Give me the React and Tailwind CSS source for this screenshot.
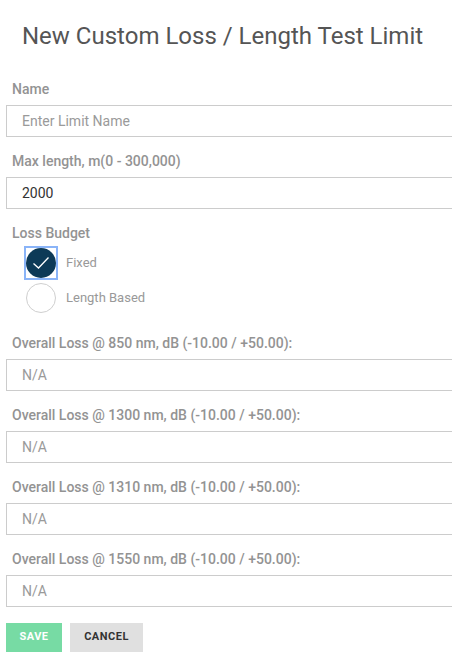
import { useState } from 'react';

const lossFields = [
  'Overall Loss @ 850 nm, dB (-10.00 / +50.00):',
  'Overall Loss @ 1300 nm, dB (-10.00 / +50.00):',
  'Overall Loss @ 1310 nm, dB (-10.00 / +50.00):',
  'Overall Loss @ 1550 nm, dB (-10.00 / +50.00):',
];

const Field = ({ label, className = 'mt-[15px]', children }) => (
  <div className={className}>
    <label className="block pl-[6px] text-[14px] font-medium leading-[18px] text-[#939393]">
      {label}
    </label>
    {children}
  </div>
);

const inputClass =
  'mt-[7px] block w-[460px] h-[32px] border border-[#cccccc] bg-white pl-[15px] text-[14px] text-[#333] placeholder:text-[#9a9a9a] outline-none';

const Radio = ({ checked, focused, label, onClick }) => (
  <button type="button" onClick={onClick} className="flex items-center gap-[9px]">
    <span
      className={`flex h-[32px] w-[32px] items-center justify-center ${
        focused ? 'outline outline-2 outline-[#8ab4f8] -outline-offset-1' : ''
      }`}
    >
      <span
        className={`flex h-[30px] w-[30px] items-center justify-center rounded-full ${
          checked ? 'bg-[#0d3a57]' : 'border border-[#cfcfcf] bg-white'
        }`}
      >
        {checked && (
          <svg width="18" height="14" viewBox="0 0 18 14" fill="none">
            <path d="M1.5 7.5 L6.5 12 L16.5 1.5" stroke="#ffffff" strokeWidth="1.3" />
          </svg>
        )}
      </span>
    </span>
    <span className="text-[13px] text-[#999]">{label}</span>
  </button>
);

const App = () => {
  const [budget, setBudget] = useState('fixed');

  return (
    <div className="min-h-screen w-[452px] overflow-hidden bg-white font-['Roboto',sans-serif]">
      {/* Dialog heading */}
      <h1 className="pl-[22px] pt-[21px] text-[24px] font-normal leading-[30px] text-[#555]">
        New Custom Loss / Length Test Limit
      </h1>

      <form className="pl-[6px]">
        <Field label="Name" className="mt-[29px]">
          <input className={inputClass} placeholder="Enter Limit Name" />
        </Field>

        <Field label="Max length, m(0 - 300,000)">
          <input className={inputClass} defaultValue="2000" />
        </Field>

        <Field label="Loss Budget">
          <div className="mt-[5px] flex flex-col gap-[3px] pb-[5px] pl-[19px]">
            <Radio
              label="Fixed"
              checked={budget === 'fixed'}
              focused={budget === 'fixed'}
              onClick={() => setBudget('fixed')}
            />
            <Radio
              label="Length Based"
              checked={budget === 'length'}
              focused={budget === 'length'}
              onClick={() => setBudget('length')}
            />
          </div>
        </Field>

        {lossFields.map((label) => (
          <Field key={label} label={label}>
            <input className={inputClass} placeholder="N/A" />
          </Field>
        ))}

        {/* Actions */}
        <div className="mt-[16px] flex gap-[8px]">
          <button
            type="button"
            className="h-[29px] w-[56px] bg-[#77dba4] text-[11px] font-bold tracking-[0.5px] text-white"
          >
            SAVE
          </button>
          <button
            type="button"
            className="h-[29px] w-[73px] bg-[#e0e0e0] text-[11px] font-bold tracking-[0.5px] text-[#333]"
          >
            CANCEL
          </button>
        </div>
      </form>
    </div>
  );
};

export default App;
